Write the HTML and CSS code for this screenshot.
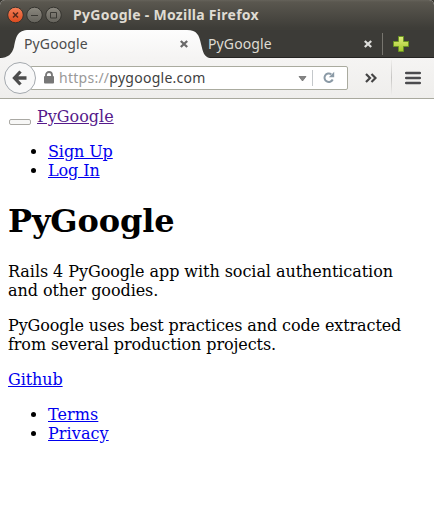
FILE: index.html
```html
<!DOCTYPE html>
<html lang="en">
<head>
<meta charset="utf-8">
<title>PyGoogle</title>
<link rel="stylesheet" href="styles.css">
</head>
<body>
<header class="titlebar">
  <svg class="controls" width="62" height="18" viewBox="0 0 62 18">
    <defs>
      <linearGradient id="red" x1="0" y1="0" x2="0" y2="1"><stop offset="0" stop-color="#f58058"/><stop offset="1" stop-color="#dc4a1d"/></linearGradient>
      <linearGradient id="gray" x1="0" y1="0" x2="0" y2="1"><stop offset="0" stop-color="#8b887f"/><stop offset="1" stop-color="#65635c"/></linearGradient>
    </defs>
    <g stroke="#34332e" stroke-width="1">
      <circle cx="9.5" cy="9" r="7.8" fill="url(#red)"/>
      <circle cx="28.5" cy="9" r="7.8" fill="url(#gray)"/>
      <circle cx="47.5" cy="9" r="7.8" fill="url(#gray)"/>
    </g>
    <path d="M7 6.500l5 5M12 6.500l-5 5" stroke="#54291b" stroke-width="1.500"/>
    <path d="M25 9.500h7M44.500 6.500h6v5.500h-6z" fill="none" stroke="#3b3a35"/>
  </svg>
  <span class="window-title">PyGoogle - Mozilla Firefox</span>
</header>
<nav class="tabs">
  <div class="tab tab-active">
    <svg class="tab-shape" width="210" height="28" viewBox="0 0 210 28">
      <defs><linearGradient id="tab" x1="0" y1="0" x2="0" y2="1"><stop offset="0" stop-color="#fdfdfd"/><stop offset="1" stop-color="#f5f4f3"/></linearGradient></defs>
      <path d="M0 28C8 28 12 24 14 17C16 7 17 0 29 0H187C197 0 199 5 201 14C203 22 204 27 210 28Z" fill="url(#tab)"/>
    </svg>
    <span class="label">PyGoogle</span>
    <svg class="close" width="10" height="10" viewBox="0 0 10 10"><path d="M1.800 2l6.400 6M8.200 2l-6.400 6" stroke="#696969" stroke-width="2.300"/></svg>
  </div>
  <div class="tab tab-idle">
    <span class="label">PyGoogle</span>
    <svg class="close" width="10" height="10" viewBox="0 0 10 10"><path d="M1.800 2l6.400 6M8.200 2l-6.400 6" stroke="#dededb" stroke-width="2.300"/></svg>
  </div>
  <svg class="new-tab" width="18" height="18" viewBox="0 0 18 18">
    <defs><linearGradient id="green" x1="0" y1="0" x2="0" y2="1"><stop offset="0" stop-color="#e0ec7c"/><stop offset="1" stop-color="#a3c82b"/></linearGradient></defs>
    <path d="M6.500 1.500h5v5h5v5h-5v5h-5v-5h-5v-5h5z" fill="url(#green)" stroke="#6b9422"/>
  </svg>
</nav>
<div class="toolbar">
  <svg class="back" width="34" height="34" viewBox="0 0 34 34">
    <circle cx="17" cy="17" r="15.500" fill="#f8f8f8" stroke="#a4a9ae"/>
    <path d="M17.500 10.500L11.500 17l6 6.500M12 17h11.500" fill="none" stroke="#4d4d4d" stroke-width="3.300"/>
  </svg>
  <div class="urlbar">
    <svg class="lock" width="10" height="13" viewBox="0 0 10 13"><path d="M2 6V4a3 3 0 0 1 6 0v2" fill="none" stroke="#777" stroke-width="1.800"/><rect y="5" width="10" height="7.500" rx="1" fill="#777"/></svg>
    <span class="url"><span class="scheme">https://</span>pygoogle.com</span>
    <svg class="drop" width="9" height="6" viewBox="0 0 9 6"><path d="M1 .500h7L4.500 5z" fill="#858585" stroke="#666" stroke-width=".7"/></svg>
    <span class="divider"></span>
    <svg class="reload" width="12" height="13" viewBox="0 0 12 13"><path d="M9.700 8.500A4.300 4.300 0 1 1 8.300 3.200" fill="none" stroke="#8b9aa6" stroke-width="2"/><path d="M11.200.8v5.400H5.800z" fill="#8b9aa6"/></svg>
  </div>
  <svg class="more" width="12" height="10" viewBox="0 0 12 10"><path d="M1 1l4 4-4 4M6.500 1l4 4-4 4" fill="none" stroke="#444" stroke-width="2.200"/></svg>
  <span class="separator"></span>
  <svg class="menu" width="16" height="14" viewBox="0 0 16 14"><path d="M1.200 2h13.600M1.200 7h13.600M1.200 12h13.600" stroke="#4b4b4e" stroke-width="2.600" stroke-linecap="round"/></svg>
</div>
<main class="page">
  <div class="brand"><button class="toggle" type="button" aria-label="Menu"></button><a class="visited" href="#">PyGoogle</a></div>
  <ul>
    <li><a href="#">Sign Up</a></li>
    <li><a href="#">Log In</a></li>
  </ul>
  <h1>PyGoogle</h1>
  <p>Rails 4 PyGoogle app with social authentication and other goodies.</p>
  <p class="tight">PyGoogle uses best practices and code extracted from several production projects.</p>
  <a class="github" href="#">Github</a>
  <ul class="footer-links">
    <li><a href="#">Terms</a></li>
    <li><a href="#">Privacy</a></li>
  </ul>
</main>
</body>
</html>
```
FILE: styles.css
```css
* { box-sizing: border-box; }
html, body { margin: 0; background: #fff; }
body { height: 528px; overflow: hidden; font-family: "Noto Sans", sans-serif; }
svg { display: block; flex: none; }

.titlebar {
  display: flex;
  align-items: center;
  height: 30px;
  padding: 0 0 1px 6px;
  background: linear-gradient(#65625a 0, #5a574f 2px, #3e3d38 28px);
  border-radius: 5px 5px 0 0;
  box-shadow: 0 0 0 5px #3b3933;
}
.window-title {
  margin-left: 5px;
  font-size: 14px;
  font-weight: 700;
  line-height: 20px;
  letter-spacing: 0.27px;
  color: #dfdbd2;
  white-space: nowrap;
}

.tabs {
  position: relative;
  display: flex;
  height: 28px;
  background: #3c3b37;
  border-bottom: 1px solid #252422;
}
.tab { position: relative; display: flex; align-items: center; height: 28px; }
.tab-active { width: 200px; padding: 0 11px 0 24px; }
.tab-shape { position: absolute; left: 0; top: 0; }
.tab-idle { width: 183px; height: 22px; margin-top: 3px; padding: 0 9px 0 8px; border-right: 1px solid #77756f; }
.tab .label { position: relative; flex: 1; font-size: 14px; line-height: 20px; letter-spacing: 0.12px; }
.tab .close { position: relative; }
.tab-active .label { color: #4c4c4c; }
.tab-idle .label { color: #dfdbd2; }
.new-tab { margin: 5px 0 0 9px; }

.toolbar {
  display: flex;
  align-items: center;
  height: 41px;
  padding: 0 13px 1px 3px;
  background: linear-gradient(#f5f4f3, #efeeec);
  border-bottom: 1px solid #a9a99e;
}
.back { position: relative; z-index: 1; }
.urlbar {
  display: flex;
  align-items: center;
  width: 318px;
  height: 24px;
  margin-left: -7px;
  padding: 0 12px 0 13px;
  background: #fff;
  border: 1px solid #aaab9f;
  border-radius: 2px;
}
.url { flex: 1; margin-left: 5px; font-size: 14px; line-height: 20px; letter-spacing: 0.26px; color: #3f3f3f; }
.scheme { color: #999; }
.drop { margin-top: 2px; }
.divider { width: 1px; height: 16px; margin: 0 10px 0 5px; background: #c4c8cb; }
.more { margin-left: 17px; }
.separator { width: 1px; height: 35px; margin-left: 14px; background: linear-gradient(#efeeec, #c6c5c3, #efeeec); }
.menu { margin-left: 13px; }

.page {
  padding: 8px;
  font: 16px/19px "DejaVu Serif", serif;
  color: #000;
}
.page a { color: #00e; }
.page a.visited { color: #551a8b; }
.toggle {
  width: 22px;
  height: 6px;
  margin: 0 6px 0 1px;
  padding: 0;
  vertical-align: -2px;
  background: #f7f7f6;
  border: 1px solid #aaa9a4;
  border-radius: 2px;
}
.page ul { margin: 16px 0; padding-left: 40px; letter-spacing: -0.1px; }
.page h1 { margin: 22.44px 0 21.44px; font-size: 32px; line-height: 38px; letter-spacing: -0.15px; }
.page p { margin: 16px 0; letter-spacing: -0.06px; }
.page p.tight { letter-spacing: -0.1px; }
.github { letter-spacing: -0.1px; }
.page .footer-links { letter-spacing: 0.08px; }
```
